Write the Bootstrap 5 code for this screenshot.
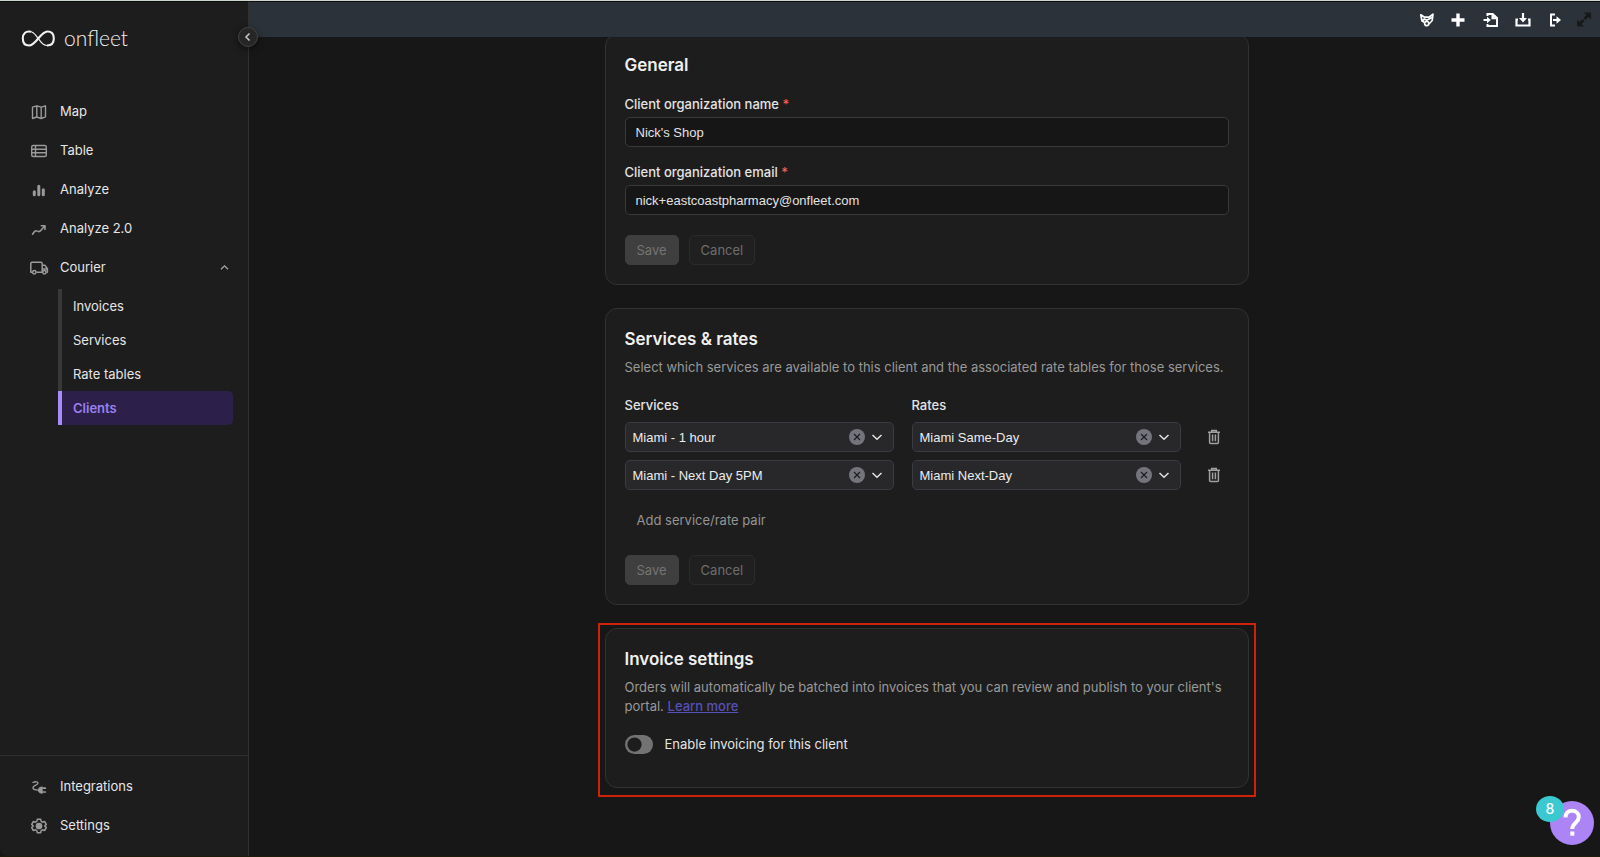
<!DOCTYPE html>
<html lang="en" data-bs-theme="dark">
<head>
<meta charset="utf-8">
<meta name="viewport" content="width=device-width, initial-scale=1">
<title>Onfleet - Clients</title>
<link href="https://cdn.jsdelivr.net/npm/bootstrap@5.3.0/dist/css/bootstrap.min.css" rel="stylesheet">
<style>
  :root { --ui: Inter, sans-serif; --field: "Liberation Sans", Arial, sans-serif; }
  body { font-family: var(--ui); font-size: 13px; line-height: 19px; color: #e4e4e4; background: #171717; border-top: 1px solid #cdd6cd; border-bottom: 1px solid #1d1c0a; }
  .sidebar { width: 249px; background: #1d1d1d; border-right: 1px solid #303030; border-top: 1px solid #0c0c0c; border-bottom-left-radius: 8px; }
  .brand { color: #f2f2f2; padding: 24px 0 0 21px; gap: 8px; height: 48px; }
  .brand-name { font: 300 21px/24px Lato, sans-serif; }
  .collapse-btn { position: absolute; right: -10px; top: 25px; width: 20px; height: 20px; border-radius: 50%; background: #262626; border: 1px solid #424242; color: #c8c8c8; z-index: 3; box-shadow: 0 2px 6px #0008; }
  .side-links { margin-top: 42px; }
  .side-link { height: 39px; padding: 0 19px 0 29px; gap: 11px; color: #e6e6e6; text-decoration: none; }
  .side-link svg:first-child { width: 20px; height: 20px; color: #9a9a9a; flex: none; }
  .sub-links { margin: 2px 15px 0 58px; }
  .sub-link { height: 34px; padding-left: 11px; border-left: 4px solid #383838; color: #e6e6e6; text-decoration: none; }
  .sub-link.current { border-color: #a78bfa; background: #2c204b; color: #9a80ee; font-weight: 600; border-radius: 0 5px 5px 0; }
  .side-foot { border-top: 1px solid #303030; padding: 11px 0; }
  .topbar { height: 36px; background: #2b323a; border-top: 1px solid #0c0c0c; padding-right: 4px; gap: 12px; position: relative; z-index: 1; }
  .tool-btn { width: 20px; height: 20px; color: #fff; }
  .tool-btn.off { color: #17191b; }
  .page-main { padding-left: 4px; }
  .content-col { max-width: 658px; margin: -3px auto 0; }
  .panel { background: #1d1d1d; border: 1px solid #323232; border-radius: 12px; padding: 17px 19px 19px; margin: 0 7px; }
  .panel h2 { font-size: 17px; line-height: 26px; font-weight: 600; margin: 0; color: #f0f0f0; }
  .panel-next { margin-top: 23px; }
  .desc { color: #999; margin: 6px 0 0; }
  .desc a { color: #5650b8; font-weight: 500; }
  .field-label { font-weight: 500; margin: 0; display: block; }
  .fields { margin-top: 17px; gap: 16px; }
  .req { color: #f0605c; }
  .panel .form-control { height: 30px; padding: 0 10px; margin-top: 3px; border: 1px solid #393939; border-radius: 5px; background: #161616; color: #e2e2e2; font: 13px var(--field); }
  .act-row { gap: 10px; margin-top: 20px; }
  .act { height: 30px; border-radius: 5px; font-size: 13px; line-height: 18px; padding: 0 11px; border: 1px solid transparent; }
  .act-save, .act-save:disabled { background: #3f3f3f; color: #747474; opacity: 1; border-color: #3f3f3f; }
  .act-cancel, .act-cancel:disabled { background: #202020; color: #6e6e6e; border-color: #2b2b2b; opacity: 1; }
  .act-add { color: #949494; margin-top: 15px; }
  .pairs { display: grid; grid-template-columns: 1fr 1fr 30px; column-gap: 18px; row-gap: 8px; margin-top: 19px; }
  .pairs .field-label { margin-bottom: -1px; }
  .combo { position: relative; }
  .combo .form-select { height: 30px; padding: 0 54px 0 7px; background: #28282b; border: 1px solid #3b3b42; border-radius: 5px; color: #ececec; font: 13px var(--field); }
  .combo .ends { position: absolute; right: 10px; top: 7px; gap: 5px; pointer-events: none; }
  .clear-btn { width: 16px; height: 16px; pointer-events: auto; color: #74747c; }
  .trash-btn { color: #a0a0a0; width: 20px; height: 20px; margin-left: 5px; }
  .highlight { border: 2px solid #cf2309; padding: 3px 0 7px; margin-top: 18px; }
  .highlight .panel { margin: 0 5px; padding-bottom: 33px; }
  .form-switch.toggle { padding: 0; margin: 19px 0 0; min-height: 0; gap: 12px; }
  .form-switch.toggle .form-check-input { width: 28px; height: 19px; margin: 0; border: 0; float: none; background-color: #737373; background-size: 19px; }
  .form-switch.toggle .form-check-input:not(:checked) { background-image: url("data:image/svg+xml,%3csvg xmlns='http://www.w3.org/2000/svg' viewBox='-4 -4 8 8'%3e%3ccircle r='3' fill='%231d1d1d'/%3e%3c/svg%3e"); }
  .help { position: fixed; right: 6px; bottom: 12px; width: 44px; height: 44px; border-radius: 50%; background: #ad84f5; color: #fff; z-index: 5; }
  .help-count { position: absolute; left: -14px; top: -5px; width: 28px; height: 26px; border-radius: 50%; background: #3cc8d0; font: 500 14px/26px var(--ui); }
</style>
</head>
<body class="d-flex min-vh-100">
<aside class="sidebar d-flex flex-column flex-shrink-0 position-relative">
  <a href="#" class="brand d-flex align-items-center text-decoration-none">
    <svg width="35" height="18" viewBox="0 0 35 18" fill="none" stroke="currentColor"><path d="M26 16.500C21.500 16.500 20 13 17.300 9.500C14.500 6 13 2.500 8.500 2.500" stroke-width="1.200"/><path d="M10 2.800C5 1.500 1.800 4.500 1.800 9.500C1.800 14 4 16.500 8 16.500C15 16.500 19.500 2.500 26.500 2.500C30.500 2.500 32.800 5 32.800 9.500C32.800 14 30.500 16.500 26 16.500" stroke-width="2.100"/></svg>
    <span class="brand-name">onfleet</span>
  </a>
  <button class="collapse-btn btn p-0 d-flex align-items-center justify-content-center" aria-label="Collapse sidebar"><svg width="10" height="10" viewBox="0 0 10 10" fill="none" stroke="currentColor" stroke-width="1.500"><path d="M6.500 1.500 3 5l3.500 3.500"/></svg></button>
  <nav class="side-links d-flex flex-column">
    <a href="#" class="side-link d-flex align-items-center"><svg viewBox="0 0 20 20" fill="none" stroke="currentColor" stroke-width="1.400" stroke-linejoin="round"><path d="M3.500 5.200 7.800 3.800l4.400 1.400 4.300-1.400v11l-4.300 1.700-4.400-1.500-4.300 1.500zM7.800 4v11M12.200 5.200v11"/></svg>Map</a>
    <a href="#" class="side-link d-flex align-items-center"><svg viewBox="0 0 20 20" fill="none" stroke="currentColor" stroke-width="1.400"><rect x="2.700" y="4.500" width="14.600" height="11" rx="1.500"/><path d="M3 8.200h14M3 11.800h14M6.500 4.500v11"/></svg>Table</a>
    <a href="#" class="side-link d-flex align-items-center"><svg viewBox="0 0 20 20" fill="none" stroke="currentColor" stroke-width="3" stroke-linecap="round"><path d="M5.300 11.800v3M9.800 6.200v8.600M14.300 9.800v5"/></svg>Analyze</a>
    <a href="#" class="side-link d-flex align-items-center"><svg viewBox="0 0 20 20" fill="none" stroke="currentColor" stroke-width="1.500" stroke-linecap="round" stroke-linejoin="round"><path d="M3.500 15.300C5.500 12.500 6.500 11 8 12s2.500 1.200 4-.7l4-4.500M12.300 6.800H16v3.800"/></svg>Analyze 2.0</a>
    <a href="#" class="side-link d-flex align-items-center"><svg viewBox="0 0 20 20" fill="none" stroke="currentColor" stroke-width="1.500" stroke-linejoin="round"><path d="M3.200 14.300H1.800V5.500c0-.8.400-1.200 1.200-1.200h9c.8 0 1.200.4 1.200 1.200v8.800H7.400M13.200 7.200h2.600l2.600 3.600v3.500h-1M13.200 11h5"/><circle cx="5.300" cy="14.300" r="1.700"/><circle cx="15.400" cy="14.300" r="1.700"/></svg>Courier<svg class="ms-auto" width="9" height="9" viewBox="0 0 9 9" fill="none" stroke="#a5a5a5" stroke-width="1.300"><path d="M1 6.300 4.500 2.800 8 6.300"/></svg></a>
    <div class="sub-links d-flex flex-column">
      <a href="#" class="sub-link d-flex align-items-center">Invoices</a>
      <a href="#" class="sub-link d-flex align-items-center">Services</a>
      <a href="#" class="sub-link d-flex align-items-center">Rate tables</a>
      <a href="#" class="sub-link current d-flex align-items-center" aria-current="page">Clients</a>
    </div>
  </nav>
  <nav class="side-foot mt-auto">
    <a href="#" class="side-link d-flex align-items-center"><svg viewBox="0 0 20 20" fill="none" stroke="currentColor" stroke-width="1.400" stroke-linecap="round"><path d="M4 5.500C6.500 4.200 9.200 4.800 8.900 6.500S4 8 4 10.500c0 1.900 2 2.600 5 2.600"/><path d="M9 13.300c0-2.600 1.700-3.800 4.700-3.800v7.200C10.700 16.700 9 15.700 9 13.300z" fill="currentColor" stroke="none"/><path d="M14 11.200h2.300M14 15h2.300" stroke-width="1.700"/></svg>Integrations</a>
    <a href="#" class="side-link d-flex align-items-center"><svg viewBox="0 0 20 20" fill="none" stroke="currentColor" stroke-width="1.500" stroke-linejoin="round"><path d="M8.300 3.300h3.400l.5 2.100 1.300.8 2.100-.7 1.700 2.900-1.600 1.600 1.600 1.600-1.700 2.900-2.100-.7-1.300.8-.5 2.100H8.300l-.5-2.100-1.300-.8-2.100.7-1.700-2.900L4.300 10 2.700 8.400l1.700-2.900 2.100.7 1.300-.8z"/><circle cx="10" cy="10" r="2.600" fill="currentColor"/></svg>Settings</a>
  </nav>
</aside>
<div class="flex-grow-1 d-flex flex-column overflow-hidden">
  <header class="topbar d-flex align-items-center justify-content-end flex-shrink-0">
    <button class="tool-btn btn p-0 d-flex border-0" aria-label="Fleet assistant"><svg width="20" height="20" viewBox="0 0 20 20" fill="none" stroke="currentColor" stroke-width="1.700" stroke-linejoin="round"><path d="M8.300 12.200 6 11 4.800 4.800 8.500 7.200H13L17 4.200 16.200 10.500 13 14"/><path d="m6 11 2.500-2 2.200 1.200L13 9l3-1.500"/><circle cx="10.700" cy="13.600" r="2.100"/></svg></button>
    <button class="tool-btn btn p-0 d-flex border-0" aria-label="New task"><svg width="20" height="20" viewBox="0 0 20 20" stroke="currentColor" stroke-width="3.400"><path d="M3.500 10h13M10 3.500v13"/></svg></button>
    <button class="tool-btn btn p-0 d-flex border-0" aria-label="Import"><svg width="20" height="20" viewBox="0 0 20 20" fill="none" stroke="currentColor" stroke-width="2"><path d="M7.500 6V4h5.200L17 8v8H7.500v-2M12.500 4v4.200H17"/><path d="M3.500 10h5"/><path d="M7 6.700v6.600l3.800-3.300z" fill="currentColor" stroke="none"/></svg></button>
    <button class="tool-btn btn p-0 d-flex border-0" aria-label="Download"><svg width="20" height="20" viewBox="0 0 20 20" fill="none" stroke="currentColor" stroke-width="2.200"><path d="M6 9.500H4.500v6h13v-6H16"/><path d="M11 3v6"/><path d="M7 8h8l-4 4.500z" fill="currentColor" stroke="none"/></svg></button>
    <button class="tool-btn btn p-0 d-flex border-0" aria-label="Log out"><svg width="20" height="20" viewBox="0 0 20 20" fill="none" stroke="currentColor" stroke-width="2"><path d="M11 4.500H7v11h4M9 10h5"/><path d="M12.500 6.200v7.600L17 10z" fill="currentColor" stroke="none"/></svg></button>
    <button class="tool-btn off btn p-0 d-flex border-0" aria-label="Full screen"><svg width="20" height="20" viewBox="0 0 20 20" fill="currentColor" stroke="currentColor"><path d="M8 2.500h7v7zM1 9.500v7h7z" stroke="none"/><path d="m12.500 5-4 4M3.500 14l4-4" stroke-width="3"/></svg></button>
  </header>
  <main class="page-main flex-grow-1 overflow-hidden">
    <div class="content-col">
      <section class="panel">
        <h2>General</h2>
        <div class="fields d-flex flex-column">
          <div>
            <label class="field-label" for="org-name">Client organization name <span class="req">*</span></label>
            <input class="form-control" id="org-name" value="Nick's Shop">
          </div>
          <div>
            <label class="field-label" for="org-email">Client organization email <span class="req">*</span></label>
            <input class="form-control" id="org-email" type="email" value="nick+eastcoastpharmacy@onfleet.com">
          </div>
        </div>
        <div class="act-row d-flex"><button class="btn act act-save" disabled>Save</button><button class="btn act act-cancel" disabled>Cancel</button></div>
      </section>
      <section class="panel panel-next">
        <h2>Services &amp; rates</h2>
        <p class="desc">Select which services are available to this client and the associated rate tables for those services.</p>
        <div class="pairs">
          <label class="field-label" for="svc1">Services</label><label class="field-label" for="rate1">Rates</label><span></span>
          <div class="combo"><select class="form-select" id="svc1"><option>Miami - 1 hour</option></select><div class="ends d-flex"><button class="clear-btn btn p-0 border-0 d-flex" aria-label="Clear service"><svg width="16" height="16" viewBox="0 0 16 16"><circle cx="8" cy="8" r="8" fill="currentColor"/><path d="m5 5 6 6m0-6-6 6" stroke="#1c1c1e" stroke-width="1.200"/></svg></button><svg width="14" height="16" viewBox="0 0 14 16" fill="none" stroke="#e2e2e2" stroke-width="1.500"><path d="m2.500 6 4.500 4.300L11.500 6"/></svg></div></div>
          <div class="combo"><select class="form-select" id="rate1"><option>Miami Same-Day</option></select><div class="ends d-flex"><button class="clear-btn btn p-0 border-0 d-flex" aria-label="Clear rate"><svg width="16" height="16" viewBox="0 0 16 16"><circle cx="8" cy="8" r="8" fill="currentColor"/><path d="m5 5 6 6m0-6-6 6" stroke="#1c1c1e" stroke-width="1.200"/></svg></button><svg width="14" height="16" viewBox="0 0 14 16" fill="none" stroke="#e2e2e2" stroke-width="1.500"><path d="m2.500 6 4.500 4.300L11.500 6"/></svg></div></div>
          <button class="trash-btn btn p-0 border-0 d-flex align-self-center" aria-label="Delete pair"><svg class="m-auto" width="14" height="16" viewBox="0 0 14 16" fill="none" stroke="currentColor" stroke-width="1.500"><path d="M1 3.200h12M4.700 3V1.500h4.600V3M2.600 3.500v10c0 .7.300 1 1 1h6.800c.7 0 1-.3 1-1v-10M5.600 5.500v6.700M8.400 5.500v6.700"/></svg></button>
          <div class="combo"><select class="form-select" id="svc2" aria-label="Services"><option>Miami - Next Day 5PM</option></select><div class="ends d-flex"><button class="clear-btn btn p-0 border-0 d-flex" aria-label="Clear service"><svg width="16" height="16" viewBox="0 0 16 16"><circle cx="8" cy="8" r="8" fill="currentColor"/><path d="m5 5 6 6m0-6-6 6" stroke="#1c1c1e" stroke-width="1.200"/></svg></button><svg width="14" height="16" viewBox="0 0 14 16" fill="none" stroke="#e2e2e2" stroke-width="1.500"><path d="m2.500 6 4.500 4.300L11.500 6"/></svg></div></div>
          <div class="combo"><select class="form-select" id="rate2" aria-label="Rates"><option>Miami Next-Day</option></select><div class="ends d-flex"><button class="clear-btn btn p-0 border-0 d-flex" aria-label="Clear rate"><svg width="16" height="16" viewBox="0 0 16 16"><circle cx="8" cy="8" r="8" fill="currentColor"/><path d="m5 5 6 6m0-6-6 6" stroke="#1c1c1e" stroke-width="1.200"/></svg></button><svg width="14" height="16" viewBox="0 0 14 16" fill="none" stroke="#e2e2e2" stroke-width="1.500"><path d="m2.500 6 4.500 4.300L11.500 6"/></svg></div></div>
          <button class="trash-btn btn p-0 border-0 d-flex align-self-center" aria-label="Delete pair"><svg class="m-auto" width="14" height="16" viewBox="0 0 14 16" fill="none" stroke="currentColor" stroke-width="1.500"><path d="M1 3.200h12M4.700 3V1.500h4.600V3M2.600 3.500v10c0 .7.300 1 1 1h6.800c.7 0 1-.3 1-1v-10M5.600 5.500v6.700M8.400 5.500v6.700"/></svg></button>
        </div>
        <button class="btn act act-add d-block">Add service/rate pair</button>
        <div class="act-row d-flex"><button class="btn act act-save" disabled>Save</button><button class="btn act act-cancel" disabled>Cancel</button></div>
      </section>
      <div class="highlight">
        <section class="panel">
          <h2>Invoice settings</h2>
          <p class="desc">Orders will automatically be batched into invoices that you can review and publish to your client's portal. <a href="#">Learn more</a></p>
          <div class="form-check form-switch toggle d-flex align-items-center"><input class="form-check-input" type="checkbox" role="switch" id="invoicing"><label for="invoicing">Enable invoicing for this client</label></div>
        </section>
      </div>
    </div>
  </main>
</div>
<button class="help btn p-0 border-0" aria-label="Help, 8 items"><svg width="44" height="44" viewBox="0 0 44 44" fill="none" stroke="currentColor" stroke-width="4"><path d="M15.500 16.500c0-4.500 2.800-6.700 6.500-6.700s6.800 2.400 6.800 6.200c0 5.500-6.500 5.800-6.500 12"/><path d="M22.300 30.500v4.200"/></svg><span class="help-count">8</span></button>
<script src="https://cdn.jsdelivr.net/npm/bootstrap@5.3.0/dist/js/bootstrap.bundle.min.js"></script>
</body>
</html>
